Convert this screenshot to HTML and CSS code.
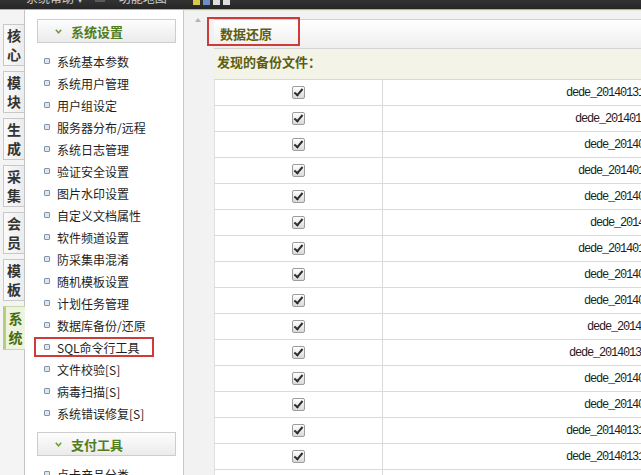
FILE: index.html
```html
<!DOCTYPE html>
<html lang="zh-CN">
<head>
<meta charset="utf-8">
<title>数据还原</title>
<link rel="stylesheet" href="styles.css">
</head>
<body>
<header class="topbar">
  <div class="topnav">
    <span class="tn">系统帮助 ▾</span>
    <span class="tn-ico"></span>
    <span class="tn">功能地图</span>
    <span class="sq sq-y"></span>
    <span class="sq sq-b"></span>
    <span class="sq sq-w"></span>
    <span class="sq sq-w"></span>
  </div>
</header>
<div class="layout">
  <nav class="tabs">
    <div class="tab">核<br>心</div>
    <div class="tab">模<br>块</div>
    <div class="tab">生<br>成</div>
    <div class="tab">采<br>集</div>
    <div class="tab">会<br>员</div>
    <div class="tab">模<br>板</div>
    <div class="tab active">系<br>统</div>
  </nav>
  <aside class="menu">
    <div class="mhead"><svg class="chev" width="7" height="5" viewBox="0 0 7 5"><polyline points="0.8,0.8 3.5,3.8 6.2,0.8" fill="none" stroke="#6e9a3a" stroke-width="1.5"/></svg>系统设置</div>
    <ul class="mlist">
      <li>系统基本参数</li>
      <li>系统用户管理</li>
      <li>用户组设定</li>
      <li>服务器分布/远程</li>
      <li>系统日志管理</li>
      <li>验证安全设置</li>
      <li>图片水印设置</li>
      <li>自定义文档属性</li>
      <li>软件频道设置</li>
      <li>防采集串混淆</li>
      <li>随机模板设置</li>
      <li>计划任务管理</li>
      <li>数据库备份/还原</li>
      <li class="hl">SQL命令行工具</li>
      <li>文件校验[S]</li>
      <li>病毒扫描[S]</li>
      <li>系统错误修复[S]</li>
    </ul>
    <div class="mhead"><svg class="chev" width="7" height="5" viewBox="0 0 7 5"><polyline points="0.8,0.8 3.5,3.8 6.2,0.8" fill="none" stroke="#6e9a3a" stroke-width="1.5"/></svg>支付工具</div>
    <ul class="mlist">
      <li>点卡产品分类</li>
      <li>点卡产品管理</li>
    </ul>
  </aside>
  <main class="content">
    <div class="gutter"><span class="uparrow"></span></div>
    <section class="panel">
      <div class="ptitle">数据还原</div>
      <div class="psub">发现的备份文件：</div>
      <table class="files">
        <tr><td class="ck"><span class="cb"></span></td><td class="fn">dede_20140131_0_a1b2c3d4e5.txt</td></tr>
        <tr><td class="ck"><span class="cb"></span></td><td class="fn">dede_20140131_0_b7f3c9d.txt</td></tr>
        <tr><td class="ck"><span class="cb"></span></td><td class="fn">dede_20140131_0_c4e8.txt</td></tr>
        <tr><td class="ck"><span class="cb"></span></td><td class="fn">dede_20140131_0_d2a6f1.txt</td></tr>
        <tr><td class="ck"><span class="cb"></span></td><td class="fn">dede_20140131_0_e9b3.txt</td></tr>
        <tr><td class="ck"><span class="cb"></span></td><td class="fn">dede_20140131_0_f5.txt</td></tr>
        <tr><td class="ck"><span class="cb"></span></td><td class="fn">dede_20140131_0_a8c2e7.txt</td></tr>
        <tr><td class="ck"><span class="cb"></span></td><td class="fn">dede_20140131_0_b1d9.txt</td></tr>
        <tr><td class="ck"><span class="cb"></span></td><td class="fn">dede_20140131_0_c6f0.txt</td></tr>
        <tr><td class="ck"><span class="cb"></span></td><td class="fn">dede_20140131_0_d3a.txt</td></tr>
        <tr><td class="ck"><span class="cb"></span></td><td class="fn">dede_20140131_0_e2b8c4d7f.txt</td></tr>
        <tr><td class="ck"><span class="cb"></span></td><td class="fn">dede_20140131_0_f7e1.txt</td></tr>
        <tr><td class="ck"><span class="cb"></span></td><td class="fn">dede_20140131_0_a5c3.txt</td></tr>
        <tr><td class="ck"><span class="cb"></span></td><td class="fn">dede_20140131_0_b9d4e6f2a1.txt</td></tr>
        <tr><td class="ck"><span class="cb"></span></td><td class="fn">dede_20140131_0_c8e2f5a3b7.txt</td></tr>
        <tr><td class="ck"><span class="cb"></span></td><td class="fn">dede_20140131_0_d1f6a9c4e2.txt</td></tr>
      </table>
    </section>
  </main>
</div>
</body>
</html>
```
FILE: styles.css
```css
html, body {
  margin: 0;
  padding: 0;
}
body {
  width: 641px;
  height: 475px;
  overflow: hidden;
  background: #f2f2f2;
  font-family: "Noto Sans CJK SC", "Liberation Sans", sans-serif;
}

/* top bar */
.topbar {
  height: 9px;
  background: linear-gradient(#333333, #262626);
  border-bottom: 1px solid #9fc462;
  box-shadow: 0 1px 0 #e6efd8;
  overflow: hidden;
}
.topnav {
  display: flex;
  align-items: center;
  margin-top: -10px;
  padding-left: 26px;
  height: 16px;
  font-size: 12px;
  line-height: 16px;
  color: #cfcfcf;
}
.tn { margin-right: 12px; }
.tn-ico {
  width: 10px;
  height: 8px;
  background: #5a5a5a;
  margin-right: 14px;
}
.sq {
  width: 7px;
  height: 7px;
  margin-right: 3px;
  margin-top: 6px;
}
.sq-y { background: #d9c94a; margin-left: 14px; }
.sq-b { background: #6c8fc8; }
.sq-w { background: #dedede; }

/* layout */
.layout {
  display: flex;
  height: 465px;
}

/* left tabs */
.tabs {
  width: 24px;
  flex: none;
  border-right: 1px solid #c4c4c4;
  background: #f4f4f4;
  padding-top: 14px;
  display: flex;
  flex-direction: column;
  gap: 5px;
}
.tab {
  margin-left: 3px;
  width: 21px;
  height: 42px;
  box-sizing: border-box;
  border: 1px solid #c8c8c8;
  border-right: none;
  background: linear-gradient(90deg, #fbfbfb, #ebebeb);
  display: flex;
  flex-direction: column;
  justify-content: center;
  align-items: center;
  font-size: 14px;
  font-weight: bold;
  line-height: 19px;
  color: #333333;
}
.tab.active {
  height: 44px;
  margin-right: -1px;
  width: 22px;
  border-color: #c8d8a8;
  border-left: 3px solid #b3cf7e;
  background: #eef3dd;
  color: #3f6d14;
}

/* menu */
.menu {
  width: 158px;
  flex: none;
  background: #ffffff;
  border-right: 1px solid #c8c8c8;
  padding-top: 9px;
}
.mhead {
  margin-left: 12px;
  width: 139px;
  height: 24px;
  box-sizing: border-box;
  border: 1px solid #cdcdcd;
  background: linear-gradient(#fdfdfd, #ebebeb);
  display: flex;
  align-items: center;
  padding-left: 17px;
  font-size: 13px;
  font-weight: bold;
  color: #4f7d1f;
}
.chev {
  margin-right: 9px;
  flex: none;
}
.mlist {
  list-style: none;
  margin: 0;
  padding: 7px 0 8px 0;
}
.mlist li {
  position: relative;
  height: 22px;
  padding-left: 19px;
  display: flex;
  align-items: center;
  font-size: 12px;
  color: #1e1e1e;
  white-space: nowrap;
}
.mlist li::before {
  content: "";
  width: 6px;
  height: 6px;
  box-sizing: border-box;
  border: 1px solid #8393a8;
  background: #dfe6ee;
  border-radius: 1px;
  margin-right: 7px;
  flex: none;
}
.mlist li.hl::after {
  content: "";
  position: absolute;
  left: 9px;
  top: 1px;
  width: 120px;
  height: 20px;
  box-sizing: border-box;
  border: 2px solid #cf3b3b;
}

/* content */
.content {
  flex: none;
  display: flex;
  padding-top: 9px;
}
.gutter {
  width: 30px;
  flex: none;
}
.uparrow {
  display: block;
  margin: -1px 0 0 11px;
  width: 0;
  height: 0;
  border-left: 3px solid transparent;
  border-right: 3px solid transparent;
  border-bottom: 4px solid #b4b4b4;
}
.panel {
  width: 716px;
  flex: none;
}
.ptitle {
  position: relative;
  height: 28px;
  line-height: 28px;
  border-top: 1px solid #d2d2d2;
  border-bottom: 1px solid #d4d4d4;
  background: linear-gradient(#ffffff, #eeeeee);
  padding-left: 6px;
  font-size: 13px;
  font-weight: bold;
  color: #5e5e0c;
}
.ptitle::after {
  content: "";
  position: absolute;
  left: -7px;
  top: -3px;
  width: 93px;
  height: 29px;
  box-sizing: border-box;
  border: 2px solid #cf3b3b;
}
.psub {
  height: 30px;
  line-height: 26px;
  background: #f3f3e8;
  border-bottom: 1px solid #d8d8d8;
  padding-left: 3px;
  font-size: 13px;
  font-weight: bold;
  color: #5e5e0c;
}
.files {
  border-collapse: collapse;
  background: #ffffff;
  border-left: 1px solid #e0e0e0;
  font-size: 12px;
  line-height: 14px;
}
.files td {
  height: 25px;
  padding: 0;
  border-bottom: 1px solid #dadada;
  vertical-align: middle;
}
.files td.ck {
  width: 167px;
  border-right: 1px solid #dadada;
}
.files td.fn {
  width: 546px;
  text-align: center;
  font-family: "Liberation Mono", "DejaVu Sans Mono", monospace;
  font-size: 12px;
  letter-spacing: -1.2px;
  color: #1e1e1e;
  white-space: nowrap;
}
.cb {
  display: block;
  margin: 0 auto;
  position: relative;
  width: 13px;
  height: 13px;
  box-sizing: border-box;
  border: 1px solid #9c9c9c;
  border-radius: 2px;
  background: linear-gradient(#ffffff, #d9d9d9);
}
.cb::after {
  content: "";
  position: absolute;
  left: 3px;
  top: 0px;
  width: 3px;
  height: 7px;
  border: solid #2e2e2e;
  border-width: 0 2px 2px 0;
  transform: rotate(40deg);
}
```
